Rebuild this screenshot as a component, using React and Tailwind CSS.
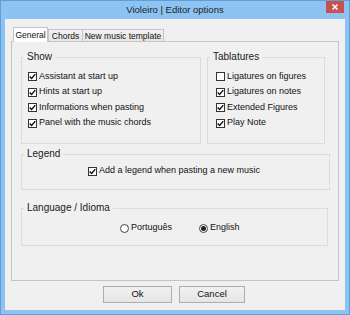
import React from "react";

function Check({ checked }) {
  return (
    <span className="w-[9px] h-[9px] border border-[#333333] bg-white flex items-center justify-center shrink-0">
      {checked && (
        <svg width="7" height="7" viewBox="0 0 7 7">
          <path d="M0.7 3.4 L2.6 5.4 L6.3 1.1" fill="none" stroke="#111111" strokeWidth="1.4" />
        </svg>
      )}
    </span>
  );
}

function Radio({ checked }) {
  return (
    <span className="w-[9px] h-[9px] rounded-full border border-[#444444] bg-white flex items-center justify-center shrink-0">
      {checked && <span className="w-[5px] h-[5px] rounded-full bg-[#222222]" />}
    </span>
  );
}

const rowH = ["h-[15px]", "h-[16px]", "h-[15px]", "h-[16px]"];

function CheckRows({ items }) {
  return (
    <div className="flex flex-col">
      {items.map(([label, checked], i) => (
        <div key={label} className={`${rowH[i]} flex items-center gap-[2px] text-[9px] text-[#111111]`}>
          <Check checked={checked} />
          <span>{label}</span>
        </div>
      ))}
    </div>
  );
}

export default function App() {
  return (
    <div className="w-[350px] h-[315px] bg-[#8dc3f2] border border-[#5f9fd8] flex flex-col font-['Liberation_Sans',Arial,sans-serif] text-[#111111]">
      {/* title bar */}
      <div className="h-[18px] grid grid-cols-[1fr_auto_1fr] items-start">
        <div />
        <div className="text-[9.5px] leading-[18px] text-[#222222]">Violeiro | Editor options</div>
        <div className="flex justify-end pr-[5px]">
          <div className="w-[18px] h-[12px] bg-[#c75050] flex items-center justify-center">
            <svg width="6" height="6" viewBox="0 0 6 6">
              <path d="M0.5 0.5 L5.5 5.5 M5.5 0.5 L0.5 5.5" stroke="#ffffff" strokeWidth="1.5" />
            </svg>
          </div>
        </div>
      </div>

      {/* client area */}
      <div className="flex-1 mx-[4px] mb-[4px] bg-[#f0f0f0] flex flex-col pt-[8px] px-[6px]">
        {/* tabs */}
        <div className="h-[14px] flex items-end pl-[2px] text-[8.5px] text-[#111111]">
          <div className="relative z-10 -mb-px w-[35px] h-[15px] border border-b-0 border-[#c4c4c4] bg-white flex items-center justify-center">
            General
          </div>
          <div className="w-[35px] h-[12px] border border-b-0 border-[#c4c4c4] bg-gradient-to-b from-[#f2f2f2] to-[#e6e6e6] flex items-center justify-center pt-[1px]">
            Chords
          </div>
          <div className="w-[81px] h-[12px] border border-b-0 border-l-0 border-[#c4c4c4] bg-gradient-to-b from-[#f2f2f2] to-[#e6e6e6] flex items-center justify-center pt-[1px]">
            New music template
          </div>
        </div>

        {/* tab panel */}
        <div className="h-[240px] border border-[#c4c4c4] bg-[#f0f0f0] pt-[9px] pl-[9px] flex flex-col">
          <div className="flex gap-[6px]">
            <fieldset className="w-[180px] border border-[#dcdcdc]">
              <legend className="ml-[2px] px-[3px] text-[10px] leading-[12px] text-[#1a1a1a]">Show</legend>
              <div className="pt-[6px] pb-[12px] pl-[6px]">
                <CheckRows
                  items={[
                    ["Assistant at start up", true],
                    ["Hints at start up", true],
                    ["Informations when pasting", true],
                    ["Panel with the music chords", true],
                  ]}
                />
              </div>
            </fieldset>
            <fieldset className="w-[118px] border border-[#dcdcdc]">
              <legend className="ml-[2px] px-[3px] text-[10px] leading-[12px] text-[#1a1a1a]">Tablatures</legend>
              <div className="pt-[6px] pb-[12px] pl-[8px]">
                <CheckRows
                  items={[
                    ["Ligatures on figures", false],
                    ["Ligatures on notes", true],
                    ["Extended Figures", true],
                    ["Play Note", true],
                  ]}
                />
              </div>
            </fieldset>
          </div>

          <fieldset className="mt-[4px] w-[309px] border border-[#dcdcdc]">
            <legend className="ml-[2px] px-[3px] text-[10px] leading-[12px] text-[#1a1a1a]">Legend</legend>
            <div className="pt-[3px] pb-[10px] pl-[66px]">
              <div className="h-[16px] flex items-center gap-[2px] text-[9px]">
                <Check checked />
                <span>Add a legend when pasting a new music</span>
              </div>
            </div>
          </fieldset>

          <fieldset className="mt-[12px] w-[307px] border border-[#dcdcdc]">
            <legend className="ml-[2px] px-[3px] text-[10px] leading-[12px] text-[#1a1a1a]">Language / Idioma</legend>
            <div className="pt-[6px] pb-[9px] pl-[98px] flex">
              <div className="w-[79px] h-[16px] flex items-center gap-[2px] text-[9px]">
                <Radio checked={false} />
                <span>Português</span>
              </div>
              <div className="h-[16px] flex items-center gap-[2px] text-[9px]">
                <Radio checked />
                <span>English</span>
              </div>
            </div>
          </fieldset>
        </div>

        {/* buttons */}
        <div className="mt-[5px] pl-[92px] flex gap-[7px] text-[9.5px] text-[#111111]">
          <button className="w-[69px] h-[17px] border border-[#adadad] bg-gradient-to-b from-[#f0f0f0] to-[#e5e5e5] flex items-center justify-center">
            Ok
          </button>
          <button className="w-[66px] h-[17px] border border-[#adadad] bg-gradient-to-b from-[#f0f0f0] to-[#e5e5e5] flex items-center justify-center">
            Cancel
          </button>
        </div>
      </div>
    </div>
  );
}
